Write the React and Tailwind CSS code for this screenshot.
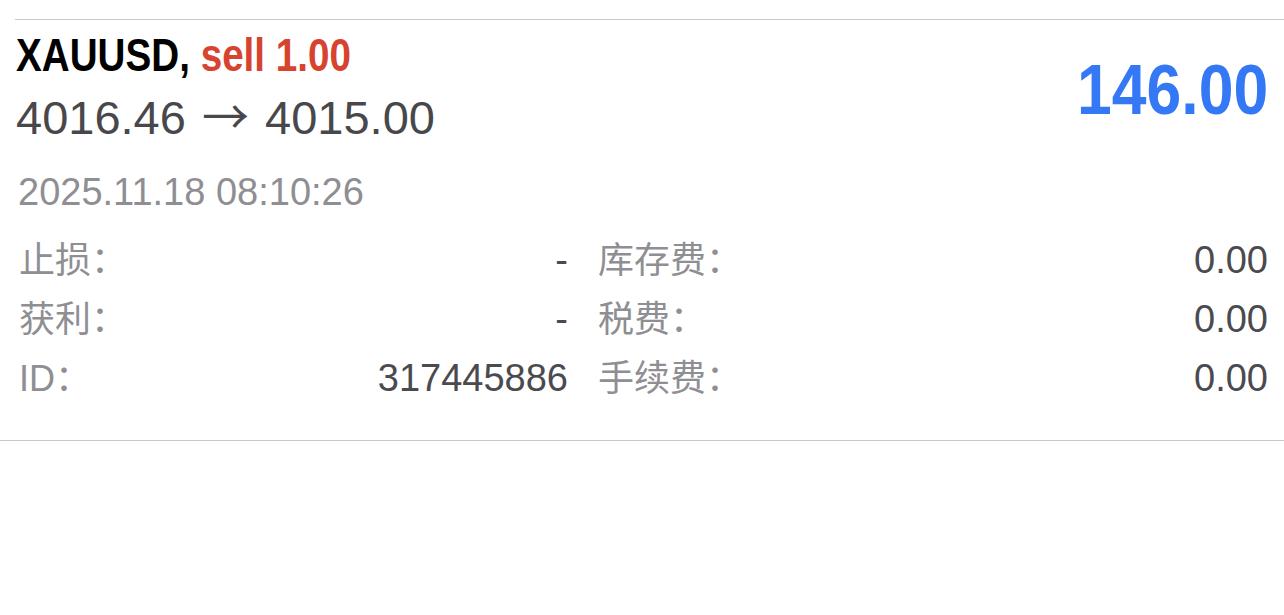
import React from 'react';

const sans = { fontFamily: '"Liberation Sans", "Noto Sans CJK SC", sans-serif' };

const trade = {
  symbol: 'XAUUSD',
  side: 'sell',
  volume: '1.00',
  open: '4016.46',
  close: '4015.00',
  profit: '146.00',
  time: '2025.11.18 08:10:26',
  left: [
    ['止损', '-'],
    ['获利', '-'],
    ['ID', '317445886'],
  ],
  right: [
    ['库存费', '0.00'],
    ['税费', '0.00'],
    ['手续费', '0.00'],
  ],
};

const Row = ({ label, value }) => (
  <div className="flex items-baseline justify-between h-[59px] leading-[59px]">
    <span className="text-[36px] text-[#8e8e93]">{label}：</span>
    <span className="text-[38px] text-[#4a4a4f]">{value}</span>
  </div>
);

export default function App() {
  return (
    <div className="min-h-screen bg-white pt-[19px]" style={sans}>
      <div className="ml-[15px] border-t border-[#c8c7cc]" />
      <div className="pt-[12px] pb-[32px] border-b border-[#c8c7cc]">
        <div className="flex items-center justify-between pl-[16px] pr-[16px]">
          <div>
            <div className="text-[46px] leading-[46px] font-bold whitespace-nowrap">
              <span className="inline-block origin-left scale-x-[0.84]">
                <span className="text-black">{trade.symbol},</span>{' '}
                <span className="text-[#d6432f]">{trade.side} {trade.volume}</span>
              </span>
            </div>
            <div className="mt-[12px] h-[56px] text-[47px] leading-[56px] text-[#48484a] whitespace-nowrap">
              {trade.open}{' '}
              <span className="leading-[0px] mx-[3px]" style={{ fontFamily: '"Noto Sans CJK SC", sans-serif' }}>→</span>{' '}
              {trade.close}
            </div>
          </div>
          <div className="text-[71px] leading-[72px] font-bold text-[#3478f6] mt-[2px]">
            <span className="inline-block origin-right scale-x-[0.88]">{trade.profit}</span>
          </div>
        </div>
        <div className="mt-[24px] pl-[18px] text-[38px] leading-[44px] text-[#8e8e93]">
          {trade.time}
        </div>
        <div className="mt-[17px] flex pl-[19px] pr-[16px]">
          <div className="w-[549px] flex flex-col">
            {trade.left.map(([l, v]) => <Row key={l} label={l} value={v} />)}
          </div>
          <div className="ml-[30px] flex-1 flex flex-col">
            {trade.right.map(([l, v]) => <Row key={l} label={l} value={v} />)}
          </div>
        </div>
      </div>
    </div>
  );
}
